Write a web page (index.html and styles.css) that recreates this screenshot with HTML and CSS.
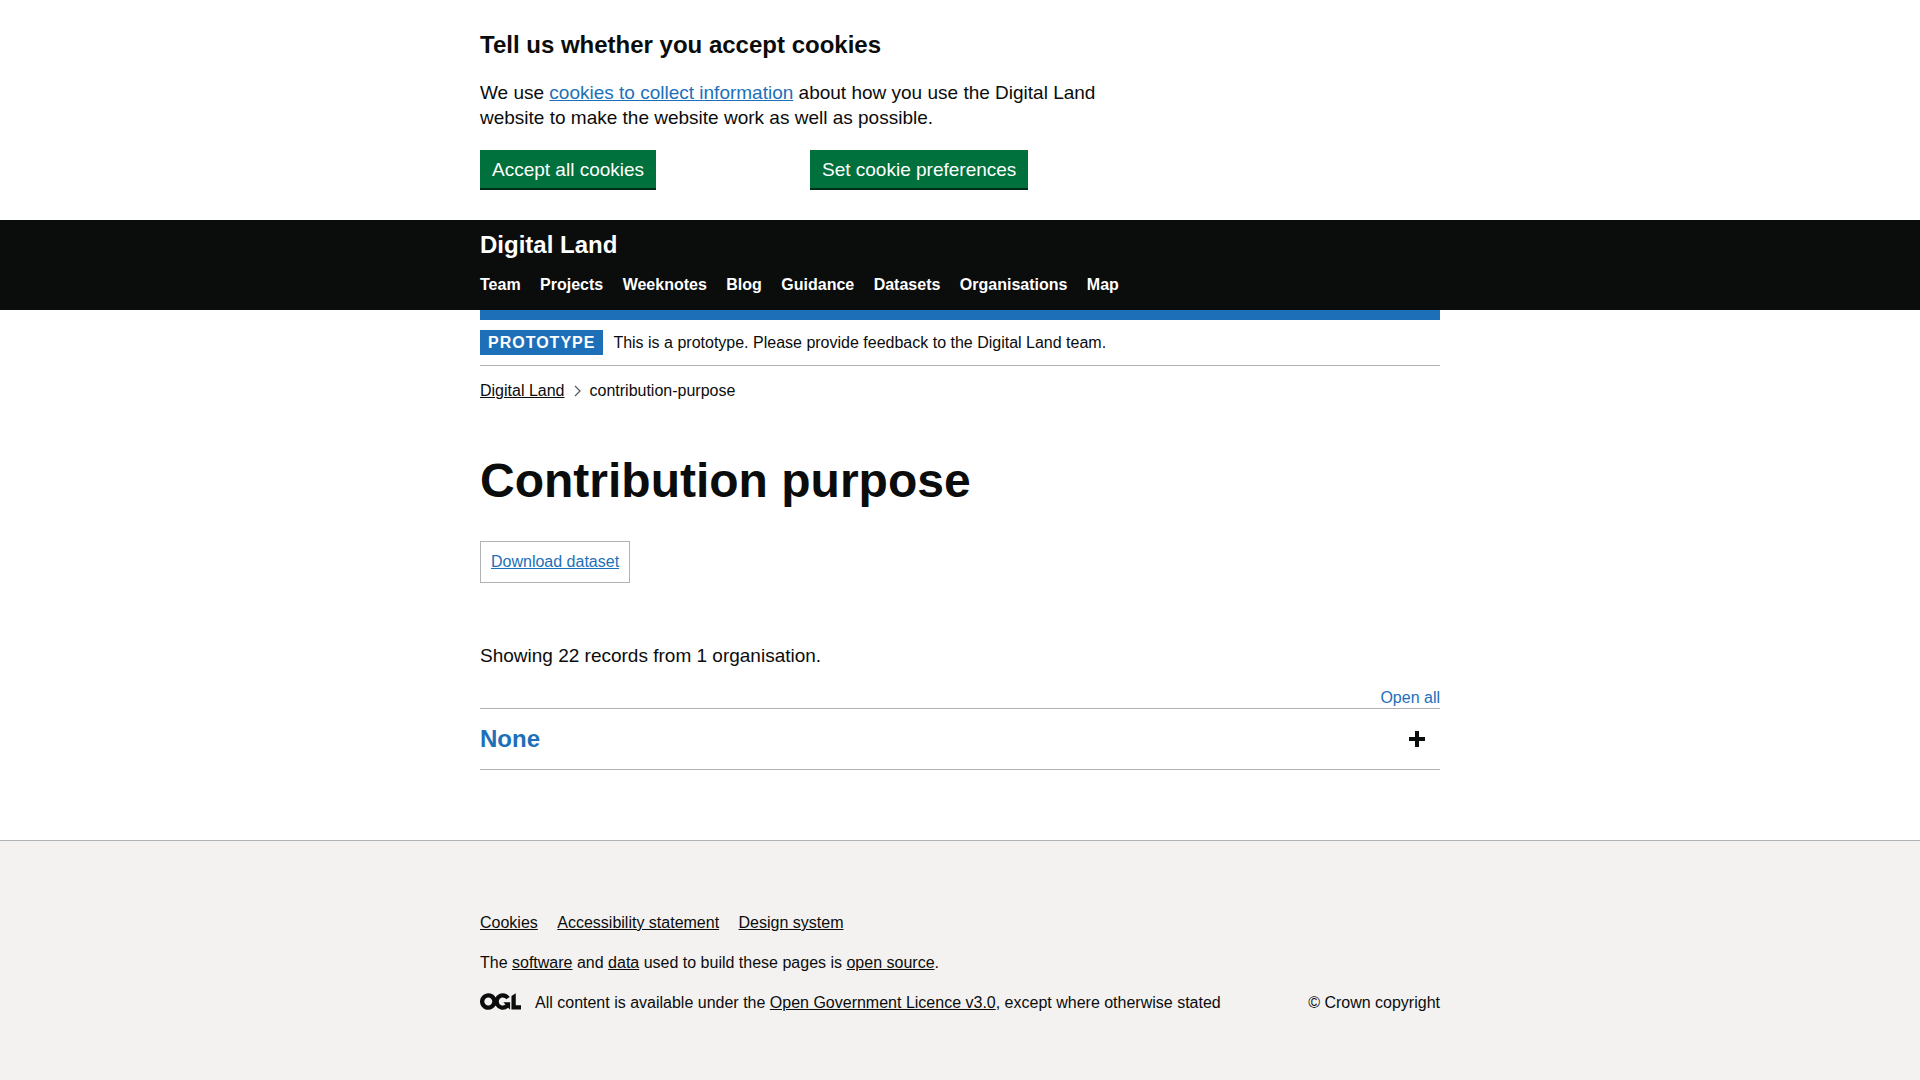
FILE: index.html
```html
<!DOCTYPE html>
<html lang="en">
<head>
<meta charset="utf-8">
<meta name="viewport" content="width=device-width, initial-scale=1">
<title>Contribution purpose | Digital Land</title>
<link rel="stylesheet" href="styles.css">
</head>
<body>
<section class="cookie-banner container" aria-label="Cookie banner">
  <div class="two-thirds">
    <h2 class="heading-m">Tell us whether you accept cookies</h2>
    <p class="body-text">We use <a class="link" href="#">cookies to collect information</a> about how you use the Digital Land website to make the website work as well as possible.</p>
    <div class="cookie-actions">
      <div><button class="button" type="button">Accept all cookies</button></div>
      <div><button class="button" type="button">Set cookie preferences</button></div>
    </div>
  </div>
</section>
<header class="header">
  <div class="container">
    <a class="header-title" href="#">Digital Land</a>
    <nav aria-label="Main">
      <ul class="header-nav inline-list">
        <li><a href="#">Team</a></li>
        <li><a href="#">Projects</a></li>
        <li><a href="#">Weeknotes</a></li>
        <li><a href="#">Blog</a></li>
        <li><a href="#">Guidance</a></li>
        <li><a href="#">Datasets</a></li>
        <li><a href="#">Organisations</a></li>
        <li><a href="#">Map</a></li>
      </ul>
    </nav>
  </div>
</header>
<div class="container">
  <div class="phase-banner">
    <strong class="tag">Prototype</strong>
    <span>This is a prototype. Please provide feedback to the Digital Land team.</span>
  </div>
  <nav aria-label="Breadcrumb">
    <ol class="breadcrumbs">
      <li><a class="link-dark" href="#">Digital Land</a></li>
      <li><svg class="chevron" viewBox="0 0 7 12" aria-hidden="true"><path d="M1 1l5 5-5 5" fill="none" stroke="#505a5f" stroke-width="1.2"/></svg>contribution-purpose</li>
    </ol>
  </nav>
  <main class="main">
    <h1 class="heading-xl">Contribution purpose</h1>
    <div class="download"><a class="link" href="#">Download dataset</a></div>
    <p class="body-text">Showing 22 records from 1 organisation.</p>
    <div class="accordion">
      <button class="open-all" type="button">Open all</button>
      <h2 class="accordion-heading">
        <button class="accordion-button" type="button" aria-expanded="false">None
          <svg class="plus" viewBox="0 0 16 16" aria-hidden="true"><path d="M6 0h4v6h6v4h-6v6H6v-6H0V6h6z"/></svg>
        </button>
      </h2>
    </div>
  </main>
</div>
<footer class="footer">
  <div class="container footer-rows">
    <ul class="inline-list">
      <li><a class="link-dark" href="#">Cookies</a></li>
      <li><a class="link-dark" href="#">Accessibility statement</a></li>
      <li><a class="link-dark" href="#">Design system</a></li>
    </ul>
    <p>The <a class="link-dark" href="#">software</a> and <a class="link-dark" href="#">data</a> used to build these pages is <a class="link-dark" href="#">open source</a>.</p>
    <div class="licence">
      <svg class="ogl" viewBox="0 0 483.2 195.7" role="img" aria-label="Open Government Licence"><path fill="currentColor" d="M421.5 142.8V.1l-50.7 32.3v161.1h112.4v-50.7zm-122.3-9.6A47.12 47.12 0 0 1 221 97.8c0-26 21.1-47.1 47.1-47.1 16.7 0 31.4 8.7 39.7 21.8l42.7-27.2A97.63 97.63 0 0 0 268.1 0c-36.5 0-68.3 20.1-85.1 49.7A98 98 0 0 0 97.8 0C43.9 0 0 43.9 0 97.8s43.9 97.8 97.8 97.8c36.5 0 68.3-20.1 85.1-49.7a97.76 97.76 0 0 0 149.6 25.4l19.4 22.2h3v-87.8h-80l24.3 27.5zM97.8 145c-26 0-47.1-21.1-47.1-47.1s21.1-47.1 47.1-47.1 47.1 21.1 47.1 47.1S123.8 145 97.8 145"/></svg>
      <span class="licence-text">All content is available under the <a class="link-dark" href="#">Open Government Licence v3.0</a>, except where otherwise stated</span>
      <a class="copyright" href="#">© Crown copyright</a>
    </div>
  </div>
</footer>
</body>
</html>
```
FILE: styles.css
```css
* { box-sizing: border-box; }

body {
  margin: 0;
  min-height: 100vh;
  display: flex;
  flex-direction: column;
  background: #fff;
  color: #0b0c0c;
  font: 16px/20px "Liberation Sans", Arial, sans-serif;
}

h1, h2, p, ul, ol { margin: 0; padding: 0; }
ul, ol { list-style: none; }
button { font-family: inherit; cursor: pointer; }

.container {
  width: calc(100% - 60px);
  max-width: 960px;
  margin: 0 auto;
}

.heading-m { font-size: 24px; line-height: 30px; margin-bottom: 20px; }
.heading-xl { font-size: 48px; line-height: 50px; margin-bottom: 35px; }
.body-text { font-size: 19px; line-height: 25px; margin-bottom: 20px; }
.link { color: #1d70b8; }
.link-dark { color: inherit; }

.inline-list li { display: inline-block; margin-right: 15px; }

/* Cookie banner */
.cookie-banner { padding: 30px 0; }
.two-thirds { max-width: 630px; }
.cookie-actions {
  display: grid;
  grid-template-columns: 1fr 1fr;
  column-gap: 30px;
}
.button {
  display: block;
  padding: 8px 10px 7px;
  margin-bottom: 2px;
  border: 2px solid transparent;
  background: #00703c;
  box-shadow: 0 2px 0 #002d18;
  color: #fff;
  font-size: 19px;
  line-height: 19px;
  white-space: nowrap;
}

/* Header */
.header { background: #0b0c0c; color: #fff; }
.header .container { padding-top: 10px; }
.header a { color: inherit; text-decoration: none; font-weight: bold; }
.header-title { display: block; font-size: 24px; line-height: 30px; }
.header-nav { padding: 15px 0; }

/* Phase banner */
.phase-banner {
  display: flex;
  align-items: center;
  gap: 10px;
  padding: 10px 0;
  border-top: 10px solid #1d70b8;
  border-bottom: 1px solid #b1b4b6;
}
.tag {
  padding: 5px 8px 4px;
  background: #1d70b8;
  color: #fff;
  line-height: 16px;
  letter-spacing: 1px;
  text-transform: uppercase;
}

.breadcrumbs { display: flex; gap: 9px; padding-top: 15px; }
.breadcrumbs li { display: flex; align-items: center; }
.chevron { width: 7px; height: 12px; margin-right: 9px; }

/* Main */
.main { padding: 55px 0 70px; }
.download {
  width: fit-content;
  padding: 10px;
  margin-bottom: 60px;
  border: 1px solid #b1b4b6;
}

.accordion { display: flex; flex-direction: column; }
.open-all {
  align-self: flex-end;
  padding: 0;
  border: 0;
  background: none;
  color: #1d70b8;
  font-size: 16px;
  line-height: 20px;
}
.accordion-heading {
  border: solid #b1b4b6;
  border-width: 1px 0;
  line-height: 30px;
}
.accordion-button {
  display: flex;
  justify-content: space-between;
  align-items: center;
  width: 100%;
  padding: 15px 15px 15px 0;
  border: 0;
  background: none;
  color: #1d70b8;
  font-size: 24px;
  font-weight: bold;
  line-height: 30px;
}
.plus { width: 16px; height: 16px; fill: #0b0c0c; }

/* Footer */
.footer {
  flex-grow: 1;
  padding: 72px 0 58px;
  border-top: 1px solid #b1b4b6;
  background: #f3f2f1;
}
.footer-rows { display: flex; flex-direction: column; gap: 20px; }
.licence { display: flex; align-items: flex-start; }
.ogl { width: 41px; height: 17px; margin-right: 14px; }
.licence-text { flex-grow: 1; }
.copyright { color: inherit; text-decoration: none; }
```
